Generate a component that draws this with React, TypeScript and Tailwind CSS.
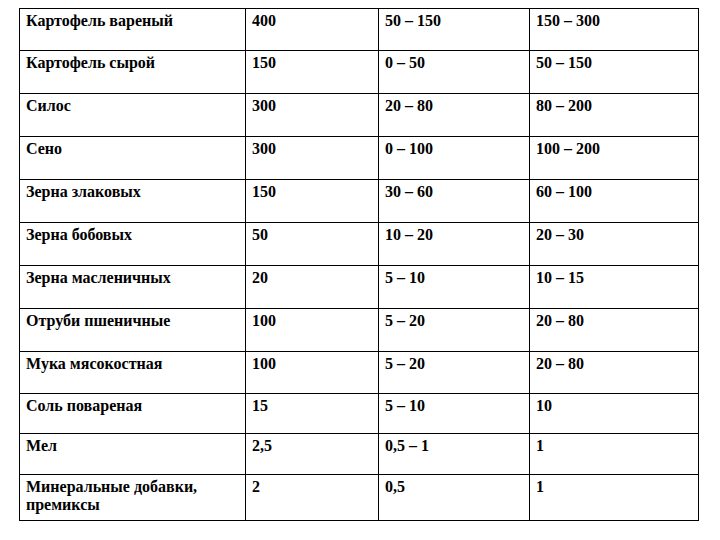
const rows: { name: string; a: string; b: string; c: string; h: string }[] = [
  { name: 'Картофель вареный', a: '400', b: '50 – 150', c: '150 – 300', h: 'h-[42px]' },
  { name: 'Картофель сырой', a: '150', b: '0 – 50', c: '50 – 150', h: 'h-[43px]' },
  { name: 'Силос', a: '300', b: '20 – 80', c: '80 – 200', h: 'h-[43px]' },
  { name: 'Сено', a: '300', b: '0 – 100', c: '100 – 200', h: 'h-[43px]' },
  { name: 'Зерна злаковых', a: '150', b: '30 – 60', c: '60 – 100', h: 'h-[43px]' },
  { name: 'Зерна бобовых', a: '50', b: '10 – 20', c: '20 – 30', h: 'h-[43px]' },
  { name: 'Зерна масленичных', a: '20', b: '5 – 10', c: '10 – 15', h: 'h-[43px]' },
  { name: 'Отруби пшеничные', a: '100', b: '5 – 20', c: '20 – 80', h: 'h-[43px]' },
  { name: 'Мука мясокостная', a: '100', b: '5 – 20', c: '20 – 80', h: 'h-[42px]' },
  { name: 'Соль повареная', a: '15', b: '5 – 10', c: '10', h: 'h-[40px]' },
  { name: 'Мел', a: '2,5', b: '0,5 – 1', c: '1', h: 'h-[41px]' },
  { name: 'Минеральные добавки, премиксы', a: '2', b: '0,5', c: '1', h: 'h-[46px]' },
];

export default function App() {
  const cell = 'border-l border-black px-[6px] pt-[3px]';

  return (
    <div className="w-[720px] h-[540px] bg-white pt-[8px] pl-[19px]">
      <div
        className="flex flex-col w-[680px] border-r border-b border-black text-[16px] leading-[18px] font-bold text-black"
        style={{ fontFamily: '"Liberation Serif"' }}
      >
        {rows.map((r) => (
          <div key={r.name} className={`grid grid-cols-[226px_133px_151px_169px] border-t border-black ${r.h}`}>
            <div className={cell}>{r.name}</div>
            <div className={cell}>{r.a}</div>
            <div className={cell}>{r.b}</div>
            <div className={cell}>{r.c}</div>
          </div>
        ))}
      </div>
    </div>
  );
}
